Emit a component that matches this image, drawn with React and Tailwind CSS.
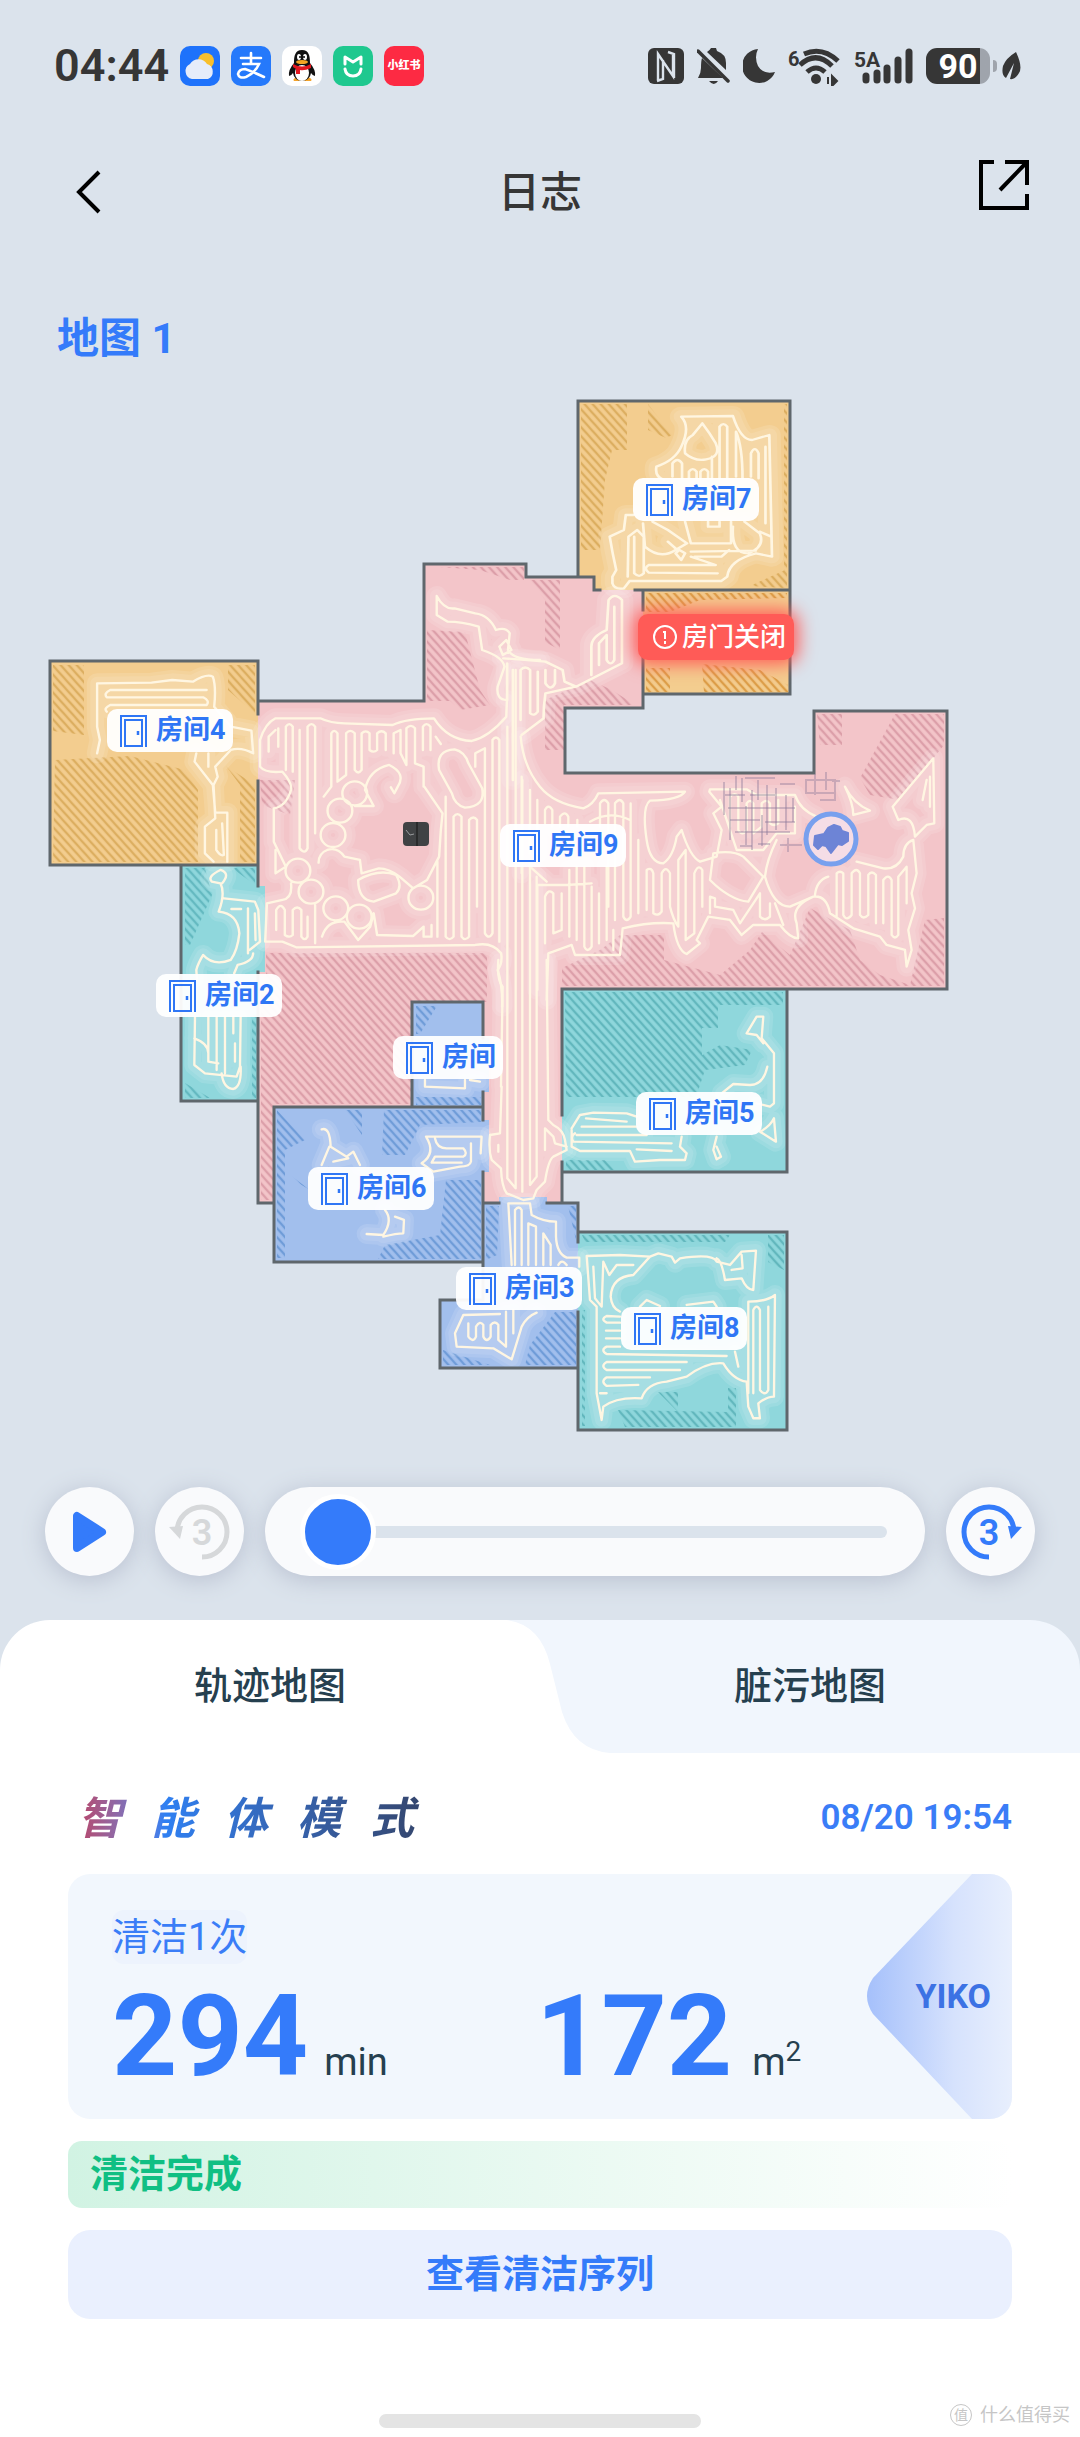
import { useState } from "react";

/* ===== MAP DATA ===== */
const PINK = "#f3c5c9";
const ORANGE = "#f3cd8f";
const TEAL = "#8fd7dc";
const BLUE = "#a2bfed";

const areas = [
  {
    id: "living",
    fill: PINK,
    line: "#dc9fa9",
    shape:
      "M424 564H526V577H594V590H643V708H565V773H814V711H947V989H562V1203H483V1107H274V1203H258V701H424Z",
    hatch:
      "M427 630L465 632L480 690L490 705L460 710L450 701H427ZM440 567H524V580H510L480 570ZM530 580H560V650L545 642V600ZM545 700L590 680L612 690L635 705H564V750H545ZM260 780H295L290 815L262 805ZM266 953H487V1002H412V1104H274V1200H261V985H266ZM562 968L600 950L620 935H664V960L720 975L750 950L762 932L790 955L810 908L850 930L860 960L880 975L910 985L925 920L944 918V986H562ZM817 714H842V745H820ZM895 714H944V745L900 800L870 795L860 778Z",
  },
  {
    id: "r7",
    fill: ORANGE,
    line: "#dcae60",
    shape: "M578 401H790V590H594V577H578Z",
    hatch:
      "M581 404H627V450H612L605 480L600 550H581ZM648 404L672 435L666 438L648 430ZM784 404H787V588H784ZM750 586L785 570V588Z",
  },
  {
    id: "closed",
    fill: ORANGE,
    line: "#dc9e48",
    shape: "M643 590H790V694H643Z",
    hatch:
      "M646 593H787V598L700 600L670 612H646ZM646 668H670V692H646ZM702 664L760 670L788 685V692H704Z",
  },
  {
    id: "r4",
    fill: ORANGE,
    line: "#dcae60",
    shape: "M50 661H258V865H50Z",
    hatch:
      "M53 665H84V735L53 731ZM55 760L130 756L185 770L198 790V862H53ZM228 665H255V714L228 690ZM226 766L255 785V862H240V785Z",
  },
  {
    id: "r2",
    fill: TEAL,
    line: "#64b9c0",
    shape: "M181 865H258V886H265V972H258V1101H181Z",
    hatch:
      "M185 868H205L212 895L190 945H185ZM232 868H255V885ZM185 1083L210 1098H185ZM252 1015H256V1098H252Z",
  },
  {
    id: "small",
    fill: BLUE,
    line: "#6f9cd8",
    shape: "M412 1002H483V1038H489V1092H483V1107H412Z",
    hatch: "M416 1006H437L420 1034H416ZM416 1097H481V1105H416Z",
  },
  {
    id: "r6",
    fill: BLUE,
    line: "#6f9cd8",
    shape: "M274 1107H483V1120H489V1172H483V1262H274Z",
    hatch:
      "M277 1110L305 1140L285 1150V1258H277ZM345 1110H362V1135ZM384 1110H481V1122L420 1125L405 1155L382 1155ZM446 1180H481V1259H378L385 1245L440 1235ZM290 1175L310 1190L300 1184Z",
  },
  {
    id: "r3",
    fill: BLUE,
    line: "#6f9cd8",
    shape: "M483 1203H499V1197H547V1203H578V1242H584V1312H578V1367H440V1300H483Z",
    hatch:
      "M486 1206H499L497 1255L486 1260ZM530 1345L555 1312H576V1365H525ZM443 1350L490 1365H443ZM568 1206H576V1240Z",
  },
  {
    id: "r5",
    fill: TEAL,
    line: "#62b7bd",
    shape: "M562 989H787V1172H562Z",
    hatch:
      "M565 992H783V1005L718 1005L718 1028H702V1055L720 1045L752 1050L745 1065L705 1070L696 1097H566ZM566 1160H605L615 1170H566Z",
  },
  {
    id: "r8",
    fill: TEAL,
    line: "#62b7bd",
    shape: "M578 1232H787V1430H578Z",
    hatch:
      "M582 1235H730L725 1242H585ZM768 1235H784V1270L768 1262ZM618 1410L728 1412V1388H736V1427H625ZM582 1310H585V1426H582ZM658 1392H678V1412Z",
  },
];

const walls =
  "M258 714V661H50V865H258M258 781V886M258 701H424V564H526V577H594V590H600M578 577V401H790V694H643M635 590H790M643 590V610M643 655V708H565V773H814V711H947V989H562M181 865V1101H258M258 972V1203H274M274 1107V1262H483V1172M274 1107H483M412 1107V1002H483V1038M483 1092V1120M483 1203H499M547 1203H578V1242M483 1203V1300H440V1368H578M562 1203V1162M562 1115V989M787 989V1172H562M578 1232H787V1430H578V1312";

// cleaning routes, one group for each section of the floor
const routes = [
  {
    at: "translate(0 540) scale(.3444 .3333)",
    d: "M282 640L290 600L282 560V430L440 428L500 420L560 425Q600 400 618 410Q628 440 622 500L670 560L730 572L735 640Q700 620 670 630L625 680L632 710L620 735L625 835L595 860V940L620 965M660 965V818H625L618 735L565 665L570 640M600 450H320Q300 460 310 472H590Q610 482 600 495H320Q300 505 310 515M628 870V930Q640 950 650 945L645 850M605 640V680",
  },
  {
    at: "translate(0 540) scale(.3444 .3333)",
    d: "M640 990Q600 1010 615 1025L640 1030Q655 1060 635 1115Q690 1120 695 1180Q690 1230 670 1260Q620 1280 590 1245Q575 1270 570 1290L572 1320M650 1075L740 1085L750 1110L755 1205L725 1230M720 1105V1240M672 1107H700M740 1120L742 1200M640 990Q670 1000 645 1030M735 1240Q735 1265 690 1275L680 1300",
  },
  {
    at: "translate(100 880) scale(.3333)",
    d: "M285 410L283 555L315 580L410 590L420 560L422 410M325 410V545L355 550M350 410V570M375 410V580M400 410V460M405 490V545M283 475Q325 490 325 520M365 580Q370 625 400 627Q425 620 422 560",
  },
  {
    at: "translate(0 540) scale(.3444 .3333)",
    d: "M755 600Q770 550 800 535H930Q960 550 1000 550L1140 555Q1180 535 1260 535Q1300 600 1370 603Q1420 590 1470 530L1472 480Q1440 480 1445 440L1465 380Q1460 350 1400 330L1390 260Q1340 245 1300 245L1268 225V168Q1290 210 1320 205L1380 220Q1420 225 1440 270Q1470 260 1480 280L1475 330Q1490 360 1568 360M1450 320L1470 300L1485 330L1460 345ZM755 600V680Q770 700 820 695Q850 730 845 750Q830 800 795 805V905L830 980L800 1000V930M780 635V590L800 570M808 565V620M830 690V560Q840 545 850 560V695M870 570V925Q885 945 893 925V560Q905 545 915 560V880M940 770L962 740V580Q970 565 980 580V725L1005 705V580Q1017 565 1030 580V690Q1040 705 1050 690V580Q1062 568 1073 580V630Q1085 640 1095 630V580Q1108 568 1120 580V630M1143 640V580L1163 570V640L1180 675V565Q1193 550 1205 565V670L1230 680V740M1228 630V560Q1238 545 1250 560V630M1265 590L1280 612M1232 740L1285 820L1280 870L1275 950L1240 1020L1200 1045L1160 1010Q1130 985 1100 985L1050 1000L1045 960L1000 950Q980 920 950 930Q925 940 925 968M1030 798L1085 798L1060 750Q1070 690 1130 675Q1180 700 1155 740L1145 760L1135 742M1275 690Q1265 630 1320 628Q1350 635 1360 670L1400 745Q1410 800 1350 803Q1320 795 1312 760ZM1040 1020Q1100 985 1150 1005Q1170 1040 1150 1060L1085 1085Q1040 1080 1040 1020ZM845 1030Q850 1075 820 1080L775 1090L770 1205H820L860 1222L1380 1215Q1430 1205 1455 1240Q1460 1270 1445 1290Q1460 1340 1458 1400M802 1170V1110Q815 1085 827 1110V1185Q840 1195 850 1185V1110Q863 1095 875 1110V1190Q885 1205 893 1190V1130M915 1095V1210M935 1190Q950 1140 1000 1145L1040 1200L1075 1160L1085 1120L1095 1185L1200 1188L1230 1160V1190H1253V1155M1270 1190V965M1294 770V1190Q1305 1205 1317 1190V830Q1328 815 1340 830V1190Q1350 1205 1362 1190V840Q1375 825 1385 840V1100M1380 680V640L1408 625V1180Q1420 1200 1430 1180V600Q1440 585 1450 600V1205M1066 760A36 36 0 1 1 994 760A36 36 0 1 1 1066 760M1023 812A36 36 0 1 1 951 812A36 36 0 1 1 1023 812M1003 885A36 36 0 1 1 931 885A36 36 0 1 1 1003 885M901 992A36 36 0 1 1 829 992A36 36 0 1 1 901 992M939 1055A36 36 0 1 1 867 1055A36 36 0 1 1 939 1055M1011 1105A36 36 0 1 1 939 1105A36 36 0 1 1 1011 1105M1079 1130A36 36 0 1 1 1007 1130A36 36 0 1 1 1079 1130M1258 1073A36 36 0 1 1 1186 1073A36 36 0 1 1 1258 1073",
  },
  {
    at: "translate(400 380) scale(.3827 .3333)",
    d: "M270 835Q330 840 380 845L425 870L430 905L460 920L580 850V660Q560 635 545 660L540 750Q500 770 500 800V885M520 855V790L540 765V840Q550 860 560 840V680M315 1020V870Q327 855 340 870V1000Q350 1010 360 995V875M380 870V910Q395 935 405 910V870M295 870V1200M280 850V960M460 920L380 940Q375 980 375 1015L318 1065",
  },
  {
    at: "translate(400 380) scale(.3827 .3333)",
    d: "M735 110L870 108Q890 180 920 180L965 165L972 530L930 520Q860 540 855 590L840 603H600L585 625Q560 630 555 610V590L565 570Q555 520 548 470L585 450L590 405H610M735 110Q760 140 735 200Q720 240 670 260Q665 290 690 300M835 295V140Q845 125 855 140V295M878 290V155Q895 200 895 295M917 290V220Q927 195 937 220V295M955 200V430M712 290V250Q725 230 737 250V295M755 295V275Q765 260 775 275V295M785 295V275Q795 260 805 275V295M815 295V230M790 130L765 165Q740 180 745 220Q770 245 800 238Q840 230 825 190Q810 160 790 130ZM635 430L640 500Q680 540 720 510L750 490L700 450L660 425M865 425V490H760L745 425M870 440Q865 520 910 520Q955 500 940 460L900 425M940 455L970 470M595 590L597 470L620 450L637 470V580Q625 595 612 580V470M830 580L650 578Q635 565 650 555H825L760 530M760 515L930 512M730 510L745 520L735 540L720 520ZM700 485L720 505M805 425V440H835V425M770 530H840L860 510",
  },
  {
    at: "translate(500 640) scale(.3333)",
    d: "M62 290Q70 380 120 440Q160 490 250 505Q280 495 295 460L555 455Q540 480 450 482Q425 500 440 600Q450 670 490 670Q520 650 530 590L545 570Q570 650 600 665L650 650L665 570L640 520L665 500L628 455L630 448H740L770 465H885Q900 510 950 530M640 640Q700 630 730 650L790 710L745 785Q690 780 630 720ZM830 600Q800 660 795 710Q820 800 870 800L940 770Q980 765 990 820L1060 865L1140 890L1160 915L1215 930L1220 980L1235 930L1225 870L1245 805L1235 760L1250 700L1240 600Q1210 610 1210 650Q1190 690 1150 685L1070 665M985 710Q950 720 945 765M690 560V470Q705 455 715 470V570Q727 590 740 570V490Q750 475 760 490V580L785 560V490Q800 475 810 490V550Q822 560 835 550V480M660 480L710 630H790L830 580H885V500M1010 830V700Q1020 690 1030 700V825Q1040 845 1055 825V700Q1070 680 1080 700V825Q1090 840 1105 825V705Q1115 690 1128 705V850M1150 850V720Q1165 700 1175 720V885Q1185 900 1195 885V710L1220 680V790M1300 355L1178 500L1195 540Q1240 520 1245 590L1280 555L1303 550ZM1268 480L1280 420M1290 410V500M1035 440Q1060 490 1110 512L1060 525Q1060 490 1035 440ZM300 560V490Q313 470 325 490V800M345 840V490Q360 470 370 490V830Q380 850 392 830V490M270 545Q330 510 390 540M415 600V820M440 810V690Q455 680 460 700V820Q475 830 485 815V700Q497 675 510 700V800Q520 840 535 860V660L557 630V900L583 880V700Q595 670 607 690V800M630 820V770L645 775V800L700 810L720 850L760 790L780 760V830Q795 845 810 830V790M825 790L850 855M65 410V700M90 450V640M112 480V640M135 550V510Q145 490 157 510V560M180 560V530Q195 510 205 530V560M232 540V560M230 680V900M253 680V920Q262 940 275 920V740M297 760V910M320 680V900M340 870V930M135 910V770Q145 745 160 760V880L185 870V760M208 690V890M112 1050V735H200L275 730M90 680L140 725M140 1080L145 940L215 915L225 945H360L368 865Q450 845 520 850Q530 930 560 942L600 910L590 900L625 830L690 840L725 885L760 855H840Q870 895 895 895L890 850Q870 800 940 770",
  },
  {
    at: "translate(420 960) scale(.3333)",
    d: "M235 0Q230 60 248 80L243 380M245 380L240 520L210 525Q205 570 215 600L243 625Q245 680 260 700L310 720L340 715L350 690L375 665Q385 600 400 590L440 570L435 540Q430 510 400 495L385 480L380 0M375 570V505L400 530L405 550L440 560M262 -700V655L287 685V-870M307 -540V695M330 -300V675L350 650V-250M235 555V575",
  },
  {
    at: "translate(420 960) scale(.3333)",
    d: "M980 220L1010 170H1030L1025 235L1062 280V430L1050 440L1010 430M980 220L1010 225L1030 250M1042 320Q1030 375 990 375L940 372L905 400M1062 475L1068 545L1020 515Q1050 500 1062 475M455 505L480 465L520 458L620 460L650 470M485 500H650M498 475L620 485M465 520Q450 530 460 545L755 550M455 510V560L480 573H630L645 605L720 600H795L800 580L780 560L785 530M470 525H680M650 568L755 573M890 530L880 570L890 598L903 590L890 560",
  },
  {
    at: "translate(420 960) scale(.3333)",
    d: "M500 888L600 885L690 890L715 880L755 890L765 908L780 895Q880 880 890 905L930 915L965 875L1008 872L1000 990Q980 990 965 955L915 960Q905 900 890 895M690 890L640 945Q575 950 572 1010Q575 1045 600 1055M520 920L525 1015L545 1040L550 905L568 945L590 915H640M500 888L510 1020L530 1040V1300L545 1380L550 1340Q590 1310 665 1315Q680 1270 740 1265L800 1250Q860 1205 910 1210Q940 1260 980 1265L985 1340L1000 1375H1020L1015 1330Q1040 1310 1062 1310L1065 1005Q1040 1025 985 1025V1300M1000 1300V1050Q1010 1030 1020 1050V1290Q1035 1310 1045 1290V1040M600 1070L560 1068Q540 1078 560 1088H600M600 1112H558M600 1135H558M600 1160H560Q540 1170 560 1182L920 1188M800 1206H560Q540 1218 560 1230H780M690 1252H560Q540 1265 560 1278L655 1275M560 1300H540M945 1175L955 1220M660 1040L680 1020L720 1038M800 1035L880 1025L890 1040M965 885L968 925L935 930",
  },
  {
    at: "translate(420 960) scale(.3333)",
    d: "M265 730L275 915M285 915V750Q297 735 305 750V915M325 915V790L348 800V915M370 915V820L392 855V915M265 730H330L335 765Q370 785 408 785V830Q410 880 440 893H478V920M415 915Q425 895 440 915M240 1062L130 1065L105 1120L110 1160L220 1165L275 1198L305 1100Q320 1070 350 1058M280 1050V1120M145 1090V1130Q160 1150 168 1130V1100Q180 1080 190 1095V1130Q200 1150 212 1130V1095Q225 1080 235 1095V1140L258 1160V1055",
  },
  {
    at: "translate(100 880) scale(.3333)",
    d: "M665 748Q690 740 692 800L740 830L760 815L780 855M665 855L688 800M700 845L745 835M978 770H1145L1142 820M978 770Q1010 820 965 850L1000 875L1080 860Q1110 860 1113 845V790M1005 775Q1010 805 1040 805H1090Q1105 820 1090 830H1005L995 848H1085M855 990Q880 1020 850 1065L800 1062M850 1070Q890 1060 910 1060L912 1020L885 1010M975 600V620L1095 625V600M1110 600L1140 605",
  },
];

const rooms = [
  { name: "房间7", x: 633, y: 478 },
  { name: "房间4", x: 107, y: 709 },
  { name: "房间9", x: 500, y: 824 },
  { name: "房间2", x: 156, y: 974 },
  { name: "房间", x: 393, y: 1036 },
  { name: "房间5", x: 636, y: 1092 },
  { name: "房间6", x: 308, y: 1167 },
  { name: "房间3", x: 456, y: 1267 },
  { name: "房间8", x: 621, y: 1307 },
];

const MAP_TOP = 390;
const MAP_HEIGHT = 1060;

const place = (x, y) => ({
  left: `${(x / 1080) * 100}%`,
  top: `${((y - MAP_TOP) / MAP_HEIGHT) * 100}%`,
});

/* ===== STATUS BAR ===== */
function AppIcons() {
  return (
    <div className="flex gap-[11px]">
      <svg className="size-10" viewBox="0 0 40 40">
        <rect width="40" height="40" rx="10" fill="#1e72fb" />
        <circle cx="26" cy="15" r="8" fill="#f8bf2c" />
        <path d="M12 33a8 8 0 0 1-2-15A10 10 0 0 1 27 18a8 8 0 0 1 1 15Z" fill="#e6ecfa" />
      </svg>
      <svg className="size-10" viewBox="0 0 40 40">
        <rect width="40" height="40" rx="10" fill="#2579fb" />
        <g fill="none" stroke="#fff" strokeWidth="2.6" strokeLinecap="round">
          <path d="M10 12H30M20 7V17M12 18H28Q24 27 15 31Q8 33 7 28Q8 23 14 23Q20 25 33 31" />
        </g>
      </svg>
      <svg className="size-10" viewBox="0 0 40 40">
        <rect width="40" height="40" rx="10" fill="#fff" />
        <path d="M12 35h6l1-3 3 3h7q2-2-3-4H15q-5 2-3 4" fill="#f3a32b" />
        <path d="M20 4C13 4 12 10 12 17Q6 24 7 30Q9 30 11 27Q12 34 20 35Q28 34 29 27Q31 30 33 30Q34 24 28 17C28 10 27 4 20 4Z" fill="#121212" />
        <ellipse cx="20" cy="27" rx="7" ry="8" fill="#fff" />
        <path d="M11 18Q20 23 29 18V22Q22 25 18 24V28H14V23L11 21Z" fill="#e3171f" />
        <ellipse cx="17" cy="11" rx="2" ry="3" fill="#fff" />
        <ellipse cx="23" cy="11" rx="2" ry="3" fill="#fff" />
        <circle cx="18" cy="11" r="1" />
        <circle cx="22" cy="11" r="1" />
        <ellipse cx="20" cy="16" rx="6" ry="2" fill="#f5a623" />
      </svg>
      <svg className="size-10" viewBox="0 0 40 40">
        <rect width="40" height="40" rx="10" fill="#1fc88f" />
        <path d="M12 18V11L20 16L28 11V18M12 23Q13 30 20 30Q27 30 28 23" fill="none" stroke="#fff" strokeWidth="3" strokeLinecap="round" strokeLinejoin="round" />
      </svg>
      <div className="flex size-10 items-center justify-center rounded-[10px] bg-[#fd2a43] text-[11px] font-black whitespace-nowrap text-white">
        小红书
      </div>
    </div>
  );
}

function StatusBar() {
  return (
    <div className="flex h-[132px] items-center justify-between pr-[58px] pl-[54px] text-[#363636]">
      <div className="flex items-center gap-[11px]">
        <span className="text-[45px] font-semibold">04:44</span>
        <AppIcons />
      </div>
      <div className="flex items-center gap-[13px]">
        <svg className="h-10 w-9" viewBox="0 0 36 40">
          <rect y="2" width="36" height="36" rx="6" fill="currentColor" />
          <path d="M10 34V8L25 30V9M15 14V33L9 35M20 6L26 8V32" fill="none" stroke="#dbe3ec" strokeWidth="2.4" />
        </svg>
        <svg className="h-10 w-[33px]" viewBox="0 0 33 40">
          <path d="M10 6Q13 4 14 2H19L20 5Q29 8 29 17V24L10 6M5 12L26 32H1Q4 27 4 22Q4 15 5 12M12 35H21Q17 41 12 35" fill="currentColor" />
          <path d="M1 5L31 35" stroke="currentColor" strokeWidth="3.5" strokeLinecap="round" />
        </svg>
        <svg className="h-10 w-8" viewBox="0 0 32 40">
          <path d="M15 3A17 17 0 1 0 32 26Q20 29 15 20Q11 11 15 3Z" fill="currentColor" />
        </svg>
        <svg className="h-10 w-[53px]" viewBox="0 0 53 40">
          <text x="0" y="20" fontSize="20" fontWeight="700" fill="currentColor">6</text>
          <g fill="none" stroke="currentColor" strokeWidth="5">
            <path d="M16 8Q34 0 50 15M12 19Q28 4 44 20M19 26Q28 18 37 26" />
          </g>
          <circle cx="28" cy="33" r="5" fill="currentColor" />
          <path d="M40 31V38M44 30V40L49 35Z" stroke="currentColor" strokeWidth="2" fill="currentColor" />
        </svg>
        <svg className="h-10 w-[59px]" viewBox="0 0 59 40">
          <text x="0" y="21" fontSize="21" fontWeight="700" fill="currentColor">5A</text>
          <g stroke="currentColor" strokeWidth="7" strokeLinecap="round">
            <path d="M12 30V34M23 27V34M33 22V34M44 14V34M55 6V34" />
          </g>
        </svg>
        <div className="flex items-center gap-[3px]">
          <div className="flex h-9 w-16 items-center justify-center rounded-[11px] bg-linear-to-r from-[#363636] from-85% to-[#9fa4ac] to-85% text-[34px] font-bold text-white">
            90
          </div>
          <div className="h-3 w-1 rounded-r-sm bg-[#9fa4ac]" />
        </div>
        <svg className="-ml-2 h-10 w-5" viewBox="0 0 20 40">
          <path d="M14 6Q21 21 17 27Q13 34 8 33L12 17L4 32Q-1 29 1 20Q4 12 14 6Z" fill="currentColor" />
        </svg>
      </div>
    </div>
  );
}

/* ===== MAP ===== */
function DoorIcon() {
  return (
    <svg className="h-8 w-[27px]" viewBox="0 0 27 32" fill="none" stroke="#2f76f5" strokeWidth="2">
      <path d="M1 32V1H26V32" />
      <path d="M5 31V5H22V31Z" />
      <path d="M18 16V20" strokeWidth="2.5" />
    </svg>
  );
}

function FloorMap() {
  return (
    <div className="relative">
      <svg className="block w-full" viewBox={`0 ${MAP_TOP} 1080 ${MAP_HEIGHT}`}>
        <defs>
          {areas.map((a) => (
            <pattern
              key={a.id}
              id={`hatch-${a.id}`}
              width="6"
              height="6"
              patternUnits="userSpaceOnUse"
              patternTransform="rotate(-42)"
            >
              <path d="M2 0V6" stroke={a.line} strokeWidth="2.4" />
            </pattern>
          ))}
          <clipPath id="floor">
            {areas.map((a) => (
              <path key={a.id} d={a.shape} />
            ))}
          </clipPath>
        </defs>

        {areas.map((a) => (
          <g key={a.id}>
            <path d={a.shape} fill={a.fill} />
            <path d={a.hatch} fill={`url(#hatch-${a.id})`} />
          </g>
        ))}

        <g fill="none" strokeLinecap="round" strokeLinejoin="round" clipPath="url(#floor)">
          {routes.map((r, i) => (
            <g key={i} transform={r.at}>
              <path d={r.d} stroke="#fff" strokeOpacity=".12" strokeWidth="60" />
              <path d={r.d} stroke="#fff" strokeOpacity=".1" strokeWidth="40" />
            </g>
          ))}
          {routes.map((r, i) => (
            <g key={i} transform={r.at}>
              <path d={r.d} stroke="#fff6e2" strokeWidth="7" />
            </g>
          ))}
        </g>

        <path d={walls} fill="none" stroke="#5f676c" strokeWidth="3" strokeLinecap="square" />

        {/* obstacles seen near the robot */}
        <g fill="none" stroke="#8d7a9c" strokeOpacity=".4" strokeWidth="2">
          <path d="M724 782V815M730 788V840M736 776V790M742 778V802M746 806V845M752 790V850M758 780V800M762 815V846M767 785V835M776 788V830M786 795V830M793 798V822" />
          <path d="M725 795H745M750 795H775M728 808H795M730 820H760M765 822H795M735 832H790M740 846H752M758 844H770M780 845H802M788 838V852M745 778H775M780 784H795" />
          <path d="M806 780H835V793H806ZM815 774V795M826 772V790M820 800H835V786M832 781H840" />
        </g>

        {/* dock */}
        <rect x="403" y="822" width="26" height="24" rx="4" fill="#404244" />
        <path d="M417 822V846" stroke="#232425" strokeWidth="1.5" fill="none" />
        <path d="M406 830L410 835L414 834" stroke="#9a9c9e" strokeWidth="1" fill="none" />

        {/* robot */}
        <circle cx="831" cy="839" r="25" fill="#f5dde6" stroke="#78a0ee" strokeWidth="5" />
        <path d="M815 836L824 834L828 828L834 825L840 827L842 831L848 833V841L842 845L838 844L831 853L826 846L822 845L818 849L814 845Z" fill="#6d84d6" stroke="#6d84d6" strokeWidth="2" strokeLinejoin="round" />
      </svg>

      {rooms.map((r) => (
        <div
          key={r.name}
          style={place(r.x, r.y)}
          className="absolute flex h-[43px] items-center gap-[9px] rounded-[10px] bg-white/95 pr-[7px] pl-[13px] text-[27px] font-bold whitespace-nowrap text-[#2f76f5]"
        >
          <DoorIcon />
          {r.name}
        </div>
      ))}

      <div
        style={place(638, 614)}
        className="absolute flex h-[46px] items-center gap-1 rounded-[10px] bg-[#ff5b57] pr-2 pl-[14px] text-[26px] font-medium whitespace-nowrap text-white shadow-[0_0_18px_4px_#ff5b57]"
      >
        <svg className="size-[26px]" viewBox="0 0 26 26" fill="none" stroke="#fff" strokeWidth="2">
          <circle cx="13" cy="13" r="11" />
          <path d="M13 7V15M13 17V20M11 8H13" />
        </svg>
        房门关闭
      </div>
    </div>
  );
}

/* ===== PLAYER ===== */
const roundButton =
  "flex size-[89px] shrink-0 items-center justify-center rounded-full bg-[#f9fafc] shadow-[0_4px_24px_#b9c0d0]";

function SkipIcon({ forward, color }) {
  return (
    <svg className="size-16" viewBox="0 0 64 64">
      <g
        transform={forward ? "translate(64 0) scale(-1 1)" : undefined}
        fill="none"
        stroke={color}
        strokeWidth="5"
      >
        <path d="M34 57A25 25 0 1 0 9 32" />
        <path d="M1 27L15 26L12 39Z" fill={color} stroke="none" />
      </g>
      <text
        x={forward ? 30 : 34}
        y="45"
        textAnchor="middle"
        fontSize="36"
        fontWeight="600"
        fill={color}
      >
        3
      </text>
    </svg>
  );
}

function Player() {
  const [progress, setProgress] = useState(0);

  return (
    <div className="flex items-center gap-[21px] px-[45px]">
      <button aria-label="播放" className={roundButton}>
        <svg className="size-12" viewBox="0 0 48 48">
          <path d="M11 8V40L36 24Z" fill="#347bfa" stroke="#347bfa" strokeWidth="8" strokeLinejoin="round" />
        </svg>
      </button>
      <button aria-label="后退3秒" className={roundButton}>
        <SkipIcon color="#d6d8da" />
      </button>
      <div className="flex h-[89px] flex-1 items-center rounded-full bg-[#f9fafc] pr-[38px] pl-[35px] shadow-[0_4px_24px_#b9c0d0]">
        <input
          type="range"
          aria-label="播放进度"
          min="0"
          max="100"
          value={progress}
          onChange={(e) => setProgress(Number(e.target.value))}
          className="h-3 w-full appearance-none rounded-full bg-[#dbe3ec]
                     [&::-webkit-slider-thumb]:size-[76px]
                     [&::-webkit-slider-thumb]:appearance-none
                     [&::-webkit-slider-thumb]:rounded-full
                     [&::-webkit-slider-thumb]:border-5
                     [&::-webkit-slider-thumb]:border-white
                     [&::-webkit-slider-thumb]:bg-[#347bfa]"
        />
      </div>
      <button aria-label="前进3秒" className={roundButton}>
        <SkipIcon forward color="#347bfa" />
      </button>
    </div>
  );
}

/* ===== BOTTOM SHEET ===== */
function Tabs() {
  return (
    <div className="relative flex h-[133px]">
      <div className="absolute inset-0 flex">
        <div className="flex-1 rounded-tl-[50px] bg-white" />
        <svg className="h-full w-[110px]" viewBox="0 0 110 133" preserveAspectRatio="none">
          <path d="M0 0H110V133H0Z" fill="#f1f6fd" />
          <path d="M0 0H6Q40 4 50 44L62 92Q74 130 110 133H0Z" fill="#fff" />
        </svg>
        <div className="w-[470px] rounded-tr-[50px] bg-[#f1f6fd]" />
      </div>
      <button className="relative flex-1 text-[38px] font-medium text-[#26404f]">轨迹地图</button>
      <button className="relative flex-1 text-[38px] font-medium text-[#26404f]">脏污地图</button>
    </div>
  );
}

function Summary() {
  return (
    <section className="flex flex-col gap-[22px] px-[68px]">
      <div className="flex h-[99px] items-center justify-between pt-8 pl-[10px]">
        <h2 className="flex gap-[29px] bg-linear-to-r from-[#b8446a] via-[#2f80f2] via-25% to-[#34456c] bg-clip-text pr-3 text-[44px] font-bold text-transparent italic">
          {"智能体模式".split("").map((c) => (
            <span key={c}>{c}</span>
          ))}
        </h2>
        <time className="text-[35px] font-semibold text-[#3a7df7]">08/20 19:54</time>
      </div>

      <div className="relative flex h-[245px] flex-col overflow-hidden rounded-[22px] bg-[#f2f7fd] px-11 pt-9">
        <svg className="absolute top-0 right-0 h-full w-[145px]" viewBox="0 0 145 245">
          <defs>
            <linearGradient id="yiko">
              <stop offset="0" stopColor="#a5c0fb" />
              <stop offset=".6" stopColor="#d6e2fd" />
              <stop offset="1" stopColor="#e8effd" />
            </linearGradient>
          </defs>
          <path d="M145 0H105L6 104Q-6 122 6 140L105 245H145Z" fill="url(#yiko)" />
        </svg>
        <button className="absolute top-[98px] right-[21px] text-[34px] leading-[48px] font-bold text-[#3c72e4]">
          YIKO
        </button>
        <p className="self-start rounded-xl bg-[#edf3fd] text-[38px] leading-[54px] text-[#3a7df7]">清洁1次</p>
        <dl className="flex pt-3 text-[38px] leading-[120px] text-[#26404f]">
          <div className="flex w-[424px] items-baseline gap-4">
            <dd className="text-[114px] font-bold text-[#347bfa]">294</dd>
            <dt>min</dt>
          </div>
          <div className="flex items-baseline gap-5">
            <dd className="text-[114px] font-bold text-[#347bfa]">172</dd>
            <dt>
              m<sup className="text-[28px]">2</sup>
            </dt>
          </div>
        </dl>
      </div>

      <p className="rounded-[14px] bg-linear-to-r from-[#d1f3e3] to-white pl-[22px] text-[38px] leading-[67px] font-bold text-[#10bf83]">
        清洁完成
      </p>

      <button className="h-[89px] rounded-[22px] bg-[#eaf0fe] text-[38px] font-bold text-[#347bfa]">
        查看清洁序列
      </button>
    </section>
  );
}

export default function App() {
  return (
    <div className="min-h-screen bg-[#dbe3ec] font-[Roboto,'Noto_Sans_CJK_SC',sans-serif]">
      <StatusBar />

      <header className="flex h-[120px] items-center justify-between px-[50px]">
        <button aria-label="返回" className="flex w-[76px] justify-center">
          <svg className="h-11 w-7" viewBox="0 0 28 44" fill="none" stroke="#000" strokeWidth="4">
            <path d="M25 2L5 22L25 42" />
          </svg>
        </button>
        <h1 className="text-[42px] font-medium text-[#363636]">日志</h1>
        <button aria-label="分享" className="flex w-[76px] justify-end pb-[14px]">
          <svg className="size-[52px]" viewBox="0 0 52 52" fill="none" stroke="#000" strokeWidth="4">
            <path d="M16 3H3V49H49V35M27 3H49V26M49 3L22 31" />
          </svg>
        </button>
      </header>

      <h2 className="px-[57px] pt-[57px] text-[42px] leading-[60px] font-bold text-[#347bfa]">地图 1</h2>
      <div className="pt-[21px]">
        <FloorMap />
      </div>
      <div className="pt-[37px]">
        <Player />
      </div>

      <main className="mt-11">
        <Tabs />
        <div className="bg-white">
          <Summary />
          <footer className="grid grid-cols-3 items-end pt-[83px] pb-[9px]">
            <div className="col-start-2 mx-auto h-[14px] w-[322px] rounded-full bg-[#e4e4e4]" />
            <div className="flex items-center justify-end gap-2 pr-[10px] text-[18px] leading-[26px] text-[#c6c6c6]">
              <span className="flex size-[22px] items-center justify-center rounded-full border border-[#c6c6c6] text-[14px]">
                值
              </span>
              什么值得买
            </div>
          </footer>
        </div>
      </main>
    </div>
  );
}
